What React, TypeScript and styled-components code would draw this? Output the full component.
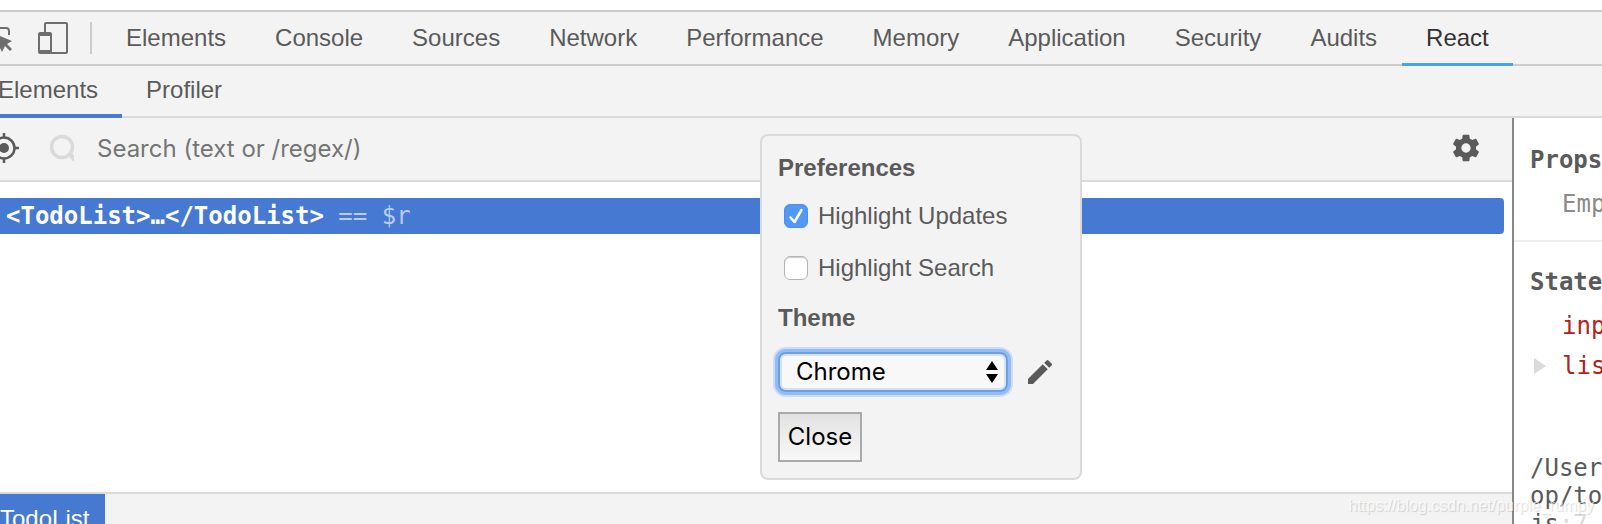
import React, { useState } from "react";
import styled, { createGlobalStyle } from "styled-components";

const sans = `"Liberation Sans", Arial, sans-serif`;
const system = `Inter, "Liberation Sans", sans-serif`;
const mono = `"DejaVu Sans Mono", monospace`;

const GlobalStyle = createGlobalStyle`
  *, *::before, *::after { box-sizing: border-box; }
  body { margin: 0; background: #fff; color: #5a5a5a; font: 24px/28px ${sans}; overflow: hidden; }
  button, input, select { font: inherit; color: inherit; }
  h2, h3, p { margin: 0; }
`;

const Window = styled.div`
  position: relative;
  display: flex;
  flex-direction: column;
  height: 100vh;
  padding-top: 10px;
  overflow: hidden;
`;

const MainBar = styled.header`
  display: flex;
  flex: none;
  height: 56px;
  background: #f3f3f3;
  border-top: 2px solid #ccc;
  box-shadow: inset 0 -2px #ccc;
`;

const BarTools = styled.div`
  display: flex;
  align-items: center;
  gap: 25px;
  width: 92px;
  margin: 10px 10px 12px 0;
  border-right: 2px solid #ccc;
`;

const IconButton = styled.button`
  display: flex;
  flex: none;
  padding: 0;
  border: 0;
  background: none;
  color: ${(p) => p.color || "#5a5a5a"};
`;

const TabList = styled.nav`
  display: flex;
  gap: 1px;
`;

const MainTab = styled.button<{ $active?: boolean }>`
  padding: 0 24px;
  border: 0;
  border-bottom: 3px solid ${(p) => (p.$active ? "#48a4ea" : "transparent")};
  background: none;
  color: ${(p) => (p.$active ? "#333" : "#5a5a5a")};
  white-space: nowrap;
`;

const SubBar = styled.nav`
  display: flex;
  flex: none;
  height: 52px;
  background: #f3f3f3;
  box-shadow: inset 0 -2px #dadada;
`;

const SubTab = styled.button<{ $active?: boolean }>`
  padding: 0 24px;
  border: 0;
  border-bottom: 4px solid ${(p) => (p.$active ? "#4679d2" : "transparent")};
  background: none;
  &:first-child { padding-left: 0; margin-left: -2px; }
`;

const Panels = styled.main`
  display: flex;
  flex: 1;
  min-height: 0;
`;

const TreePanel = styled.section`
  position: relative;
  display: flex;
  flex-direction: column;
  flex: 1;
  min-width: 0;
`;

const Toolbar = styled.div`
  display: flex;
  flex: none;
  align-items: center;
  height: 64px;
  padding: 0 30px 2px 0;
  background: #f3f3f3;
  border-bottom: 2px solid #dadada;
`;

const SearchBox = styled.label`
  display: flex;
  flex: 1;
  align-items: center;
  gap: 22px;
  margin-left: 31px;
  color: #dadada;
`;

const SearchInput = styled.input`
  flex: 1;
  min-width: 0;
  padding: 2px 0 0;
  border: 0;
  outline: 0;
  background: none;
  font-family: ${system};
  &::placeholder { color: #757575; opacity: 1; }
`;

const Tree = styled.div`
  flex: 1;
  padding: 16px 8px 0 0;
`;

const TreeRow = styled.div`
  padding: 4px 6px;
  border-radius: 0 4px 4px 0;
  background: #4679d2;
  color: #fff;
  font-family: ${mono};
  white-space: pre;
`;

const Dim = styled.span`
  color: #b9cbee;
`;

const Breadcrumbs = styled.footer`
  display: flex;
  flex: none;
  height: 32px;
  overflow: hidden;
  background: #f3f3f3;
  border-top: 2px solid #dadada;
`;

const Crumb = styled.button`
  flex: none;
  height: 50px;
  padding: 0 16px 0 0;
  border: 0;
  background: #4679d2;
  color: #fff;
`;

const Dialog = styled.form`
  position: absolute;
  top: 16px;
  right: 430px;
  display: flex;
  flex-direction: column;
  align-items: flex-start;
  width: 322px;
  padding: 18px 16px 16px;
  border: 2px solid #dadada;
  border-radius: 8px;
  background: #f3f3f3;
`;

const Heading = styled.h3`
  font-size: 24px;
  font-weight: 700;
  line-height: 28px;
`;

const Options = styled.div`
  padding: 8px 0 10px;
`;

const Option = styled.label`
  display: flex;
  align-items: center;
  gap: 10px;
  height: 52px;
  padding-left: 6px;
`;

const Tick = styled.input`
  appearance: none;
  width: 24px;
  height: 24px;
  margin: 0;
  border: 1px solid #b4b4b4;
  border-radius: 6px;
  background: #fff;
  box-shadow: inset 0 1px 1px #ccc;
  &:checked { border-color: #4a90f0; background: #5198f7; box-shadow: none; }
`;

const TickBox = styled.span`
  display: grid;
  & > * { grid-area: 1 / 1; }
  & > svg { pointer-events: none; visibility: hidden; }
  & > input:checked + svg { visibility: visible; }
`;

const ThemeRow = styled.div`
  display: flex;
  align-items: center;
  gap: 16px;
  margin: 20px 0;
`;

const SelectBox = styled.span`
  display: grid;
  align-items: center;
  width: 230px;
  & > * { grid-area: 1 / 1; }
  & > svg { justify-self: end; margin-right: 10px; pointer-events: none; }
`;

const ThemeSelect = styled.select`
  appearance: none;
  width: 100%;
  height: 40px;
  padding: 0 16px;
  border: 2px solid #6f9fdc;
  border-radius: 8px;
  outline: 0;
  background: #f8f8f8;
  box-shadow: inset 0 0 0 2px #d0e1f9, 0 0 0 3px #92bcf6, 0 0 0 5px #cbdcf6;
  color: #000;
  font-family: ${system};
`;

const CloseButton = styled.button`
  width: 84px;
  height: 50px;
  padding: 0;
  border: 2px solid #aaa;
  background: linear-gradient(#e2e2e2, #f8f8f8);
  color: #000;
  font-family: ${system};
`;

const Details = styled.aside`
  flex: none;
  width: 90px;
  padding-top: 2px;
  overflow: hidden;
  border-left: 2px solid #888;
  font-family: ${mono};
  white-space: nowrap;
`;

const Group = styled.section`
  padding: 26px 16px 0;
  & + & { border-top: 2px solid #eee; }
`;

const GroupTitle = styled.h2`
  font-size: 24px;
  line-height: 28px;
`;

const Empty = styled.p`
  padding: 16px 0 22px 32px;
  color: #8a8a8a;
`;

const PropList = styled.div`
  padding-top: 10px;
`;

const Prop = styled.div`
  display: flex;
  align-items: center;
  height: 40px;
  color: #b5201b;
`;

const Arrow = styled.span`
  flex: none;
  display: flex;
  width: 32px;
  padding-left: 4px;
  color: #dadada;
`;

const Source = styled.p`
  padding: 68px 16px 0;
`;

const Faint = styled.span`
  color: #dadada;
`;

const Watermark = styled.div`
  position: absolute;
  right: 8px;
  bottom: 8px;
  color: rgba(255, 255, 255, 0.7);
  font-size: 16px;
  line-height: 20px;
  text-shadow: 1px 1px 1px rgba(0, 0, 0, 0.15);
`;

const mainTabs = ["Elements", "Console", "Sources", "Network", "Performance", "Memory", "Application", "Security", "Audits", "React"];

function InspectIcon() {
  return (
    <svg width="13" height="32" viewBox="0 0 13 32" fill="currentColor">
      <path d="M0 5h6q4 0 4 4v4H8V9q0-2-2-2H0zM0 14l12 5-5 3 5 5-2 2-5-5-3 6-2-4z" />
    </svg>
  );
}

function DeviceIcon() {
  return (
    <svg width="30" height="32" viewBox="0 0 30 32">
      <path d="M7 10V2q0-1 1-1h20q1 0 1 1v28q0 1-1 1H13" fill="none" stroke="currentColor" strokeWidth="2" />
      <path fillRule="evenodd" fill="currentColor" d="M2 10h10q2 0 2 2v18q0 2-2 2H2q-2 0-2-2V12q0-2 2-2zM2 14v14h10V14z" />
    </svg>
  );
}

function TargetIcon() {
  return (
    <svg width="19" height="30" viewBox="0 0 19 30">
      <circle cx="4" cy="15" r="5" fill="currentColor" />
      <circle cx="4" cy="15" r="10.5" fill="none" stroke="currentColor" strokeWidth="2.5" />
      <path d="M4 0v5M4 25v5M14 15h5" stroke="currentColor" strokeWidth="2.5" />
    </svg>
  );
}

function SearchIcon() {
  return (
    <svg width="25" height="28" viewBox="0 0 25 28">
      <circle cx="12" cy="13" r="10.5" fill="none" stroke="currentColor" strokeWidth="3.5" />
      <path d="M17 21l3-3 4 3v7z" fill="currentColor" />
    </svg>
  );
}

function GearIcon() {
  return (
    <svg width="32" height="32" viewBox="0 0 24 24" fill="currentColor">
      <path d="M19.43 12.98c.04-.32.07-.64.07-.98s-.03-.66-.07-.98l2.11-1.65c.19-.15.24-.42.12-.64l-2-3.46c-.12-.22-.39-.3-.61-.22l-2.49 1c-.52-.4-1.08-.73-1.69-.98l-.38-2.65C14.46 2.18 14.25 2 14 2h-4c-.25 0-.46.18-.49.42l-.38 2.65c-.61.25-1.17.59-1.69.98l-2.49-1c-.23-.09-.49 0-.61.22l-2 3.46c-.13.22-.07.49.12.64l2.11 1.65c-.04.32-.07.65-.07.98s.03.66.07.98l-2.11 1.65c-.19.15-.24.42-.12.64l2 3.46c.12.22.39.3.61.22l2.49-1c.52.4 1.08.73 1.69.98l.38 2.65c.03.24.24.42.49.42h4c.25 0 .46-.18.49-.42l.38-2.65c.61-.25 1.17-.59 1.69-.98l2.49 1c.23.09.49 0 .61-.22l2-3.46c.12-.22.07-.49-.12-.64zM12 15.5A3.5 3.5 0 1 1 12 8.500a3.500 3.500 0 0 1 0 7z" />
    </svg>
  );
}

function PencilIcon() {
  return (
    <svg width="32" height="32" viewBox="0 0 24 24" fill="currentColor">
      <path d="M3 17.25V21h3.75L17.81 9.94l-3.75-3.75zM20.71 7.04a1 1 0 0 0 0-1.41l-2.34-2.34a1 1 0 0 0-1.41 0l-1.83 1.83 3.75 3.75z" />
    </svg>
  );
}

function CheckOption({ label, initial }: { label: string; initial: boolean }) {
  const [on, setOn] = useState(initial);
  return (
    <Option>
      <TickBox>
        <Tick type="checkbox" checked={on} onChange={() => setOn(!on)} />
        <svg width="24" height="24" viewBox="0 0 24 24" fill="none" stroke="#fff" strokeWidth="2.5" strokeLinecap="round" strokeLinejoin="round">
          <path d="M6.500 13.500l4 4.500 7-12" />
        </svg>
      </TickBox>
      {label}
    </Option>
  );
}

export default function App() {
  const [tab, setTab] = useState("React");
  return (
    <Window>
      <GlobalStyle />
      <MainBar>
        <BarTools>
          <IconButton color="#6e6e6e" aria-label="Inspect"><InspectIcon /></IconButton>
          <IconButton color="#6e6e6e" aria-label="Device mode"><DeviceIcon /></IconButton>
        </BarTools>
        <TabList>
          {mainTabs.map((name) => (
            <MainTab key={name} $active={name === tab} onClick={() => setTab(name)}>{name}</MainTab>
          ))}
        </TabList>
      </MainBar>
      <SubBar>
        <SubTab $active>Elements</SubTab>
        <SubTab>Profiler</SubTab>
      </SubBar>
      <Panels>
        <TreePanel>
          <Toolbar>
            <IconButton aria-label="Select component"><TargetIcon /></IconButton>
            <SearchBox>
              <SearchIcon />
              <SearchInput placeholder="Search (text or /regex/)" aria-label="Search" />
            </SearchBox>
            <IconButton aria-label="Settings"><GearIcon /></IconButton>
          </Toolbar>
          <Tree>
            <TreeRow><b>&lt;TodoList&gt;…&lt;/TodoList&gt;</b><Dim> == $r</Dim></TreeRow>
          </Tree>
          <Breadcrumbs><Crumb>TodoList</Crumb></Breadcrumbs>
          <Dialog onSubmit={(e) => e.preventDefault()}>
            <Heading>Preferences</Heading>
            <Options>
              <CheckOption label="Highlight Updates" initial />
              <CheckOption label="Highlight Search" initial={false} />
            </Options>
            <Heading as="label" htmlFor="theme">Theme</Heading>
            <ThemeRow>
              <SelectBox>
                <ThemeSelect id="theme"><option>Chrome</option></ThemeSelect>
                <svg width="12" height="22" viewBox="0 0 12 22"><path d="M0 9l6-9 6 9zM0 13h12l-6 9z" /></svg>
              </SelectBox>
              <IconButton type="button" aria-label="Edit theme"><PencilIcon /></IconButton>
            </ThemeRow>
            <CloseButton type="submit">Close</CloseButton>
          </Dialog>
        </TreePanel>
        <Details>
          <Group>
            <GroupTitle>Props</GroupTitle>
            <Empty>Emp</Empty>
          </Group>
          <Group>
            <GroupTitle>State</GroupTitle>
            <PropList>
              <Prop><Arrow />inp</Prop>
              <Prop>
                <Arrow><svg width="12" height="16" viewBox="0 0 12 16" fill="currentColor"><path d="M0 0l12 8-12 8z" /></svg></Arrow>
                lis
              </Prop>
            </PropList>
          </Group>
          <Source>/User<br />op/to<br />js<Faint>:7</Faint></Source>
        </Details>
      </Panels>
      <Watermark>https://blog.csdn.net/purple_rumpy</Watermark>
    </Window>
  );
}
